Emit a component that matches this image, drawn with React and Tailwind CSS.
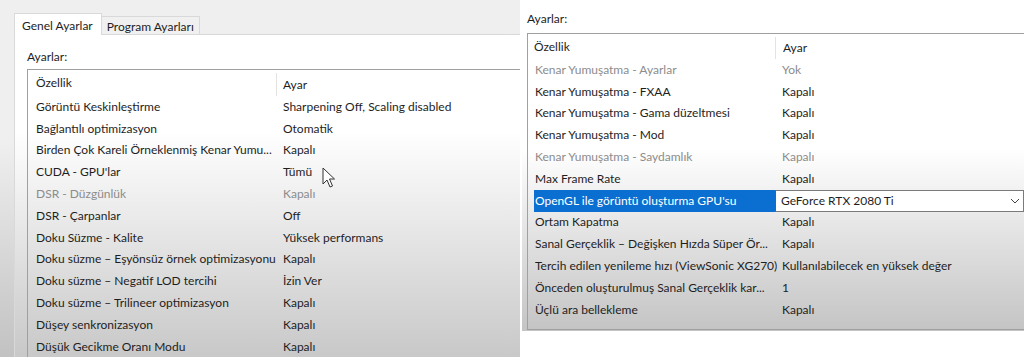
import React from 'react';

const leftRows = [
  ['Görüntü Keskinleştirme', 'Sharpening Off, Scaling disabled'],
  ['Bağlantılı optimizasyon', 'Otomatik'],
  ['Birden Çok Kareli Örneklenmiş Kenar Yumu...', 'Kapalı'],
  ["CUDA - GPU'lar", 'Tümü'],
  ['DSR - Düzgünlük', 'Kapalı', true],
  ['DSR - Çarpanlar', 'Off'],
  ['Doku Süzme - Kalite', 'Yüksek performans'],
  ['Doku süzme – Eşyönsüz örnek optimizasyonu', 'Kapalı'],
  ['Doku süzme – Negatif LOD tercihi', 'İzin Ver'],
  ['Doku süzme – Trilineer optimizasyon', 'Kapalı'],
  ['Düşey senkronizasyon', 'Kapalı'],
  ['Düşük Gecikme Oranı Modu', 'Kapalı'],
];

const rightRows = [
  ['Kenar Yumuşatma - Ayarlar', 'Yok', true],
  ['Kenar Yumuşatma - FXAA', 'Kapalı'],
  ['Kenar Yumuşatma - Gama düzeltmesi', 'Kapalı'],
  ['Kenar Yumuşatma - Mod', 'Kapalı'],
  ['Kenar Yumuşatma - Saydamlık', 'Kapalı', true],
  ['Max Frame Rate', 'Kapalı'],
  ["OpenGL ile görüntü oluşturma GPU'su", 'GeForce RTX 2080 Ti', false, true],
  ['Ortam Kapatma', 'Kapalı'],
  ['Sanal Gerçeklik – Değişken Hızda Süper Ör...', 'Kapalı'],
  ['Tercih edilen yenileme hızı (ViewSonic XG270)', 'Kullanılabilecek en yüksek değer'],
  ['Önceden oluşturulmuş Sanal Gerçeklik kar...', '1'],
  ['Üçlü ara bellekleme', 'Kapalı'],
];

const Cursor = () => (
  <svg className="absolute left-[322px] top-[167px]" width="14" height="22" viewBox="0 0 14 22">
    <path d="M1 1 L1 17 L5 13 L8 20 L10.5 19 L7.5 12 L12.5 12 Z" fill="#fff" stroke="#333" strokeWidth="1" strokeLinejoin="round" />
  </svg>
);

const Row = ({ name, value, muted, selected, colW }) => {
  const tone = muted ? 'text-[#8c8c8c]' : 'text-[#1e1e1e]';
  if (selected) {
    return (
      <div className="flex h-[21.8px] items-stretch">
        <div className={`${colW} flex items-center`}>
          <div className="h-full flex-1 bg-[#0a6fd0] text-white flex items-center pl-px whitespace-nowrap overflow-hidden">{name}</div>
        </div>
        <div className="flex-1 flex items-center justify-between bg-white border border-[#7a7a7a] border-l-[#0a6fd0] pl-[5px] pr-[3px]">
          <span className="text-[#1e1e1e]">{value}</span>
          <svg width="10" height="6" viewBox="0 0 10 6"><path d="M1 1 L5 5 L9 1" fill="none" stroke="#444" strokeWidth="1" /></svg>
        </div>
      </div>
    );
  }
  return (
    <div className="flex h-[21.8px] items-center">
      <div className={`${colW} shrink-0 whitespace-nowrap pl-px ${tone}`}>{name}</div>
      <div className={`flex-1 pl-[7px] whitespace-nowrap ${tone}`}>{value}</div>
    </div>
  );
};

export default function App() {
  return (
    <div className="relative flex w-[1024px] h-[357px] bg-white overflow-hidden font-['Lato','Open_Sans',sans-serif] text-[12px] leading-4">
      {/* left screenshot */}
      <div className="w-[520px] h-full flex flex-col pl-[14px] pt-[13px] bg-gradient-to-b from-[#efefef] from-40% to-[#c2c2c2]">
        <div className="flex items-end h-[22px]">
          <div className="h-[22px] pl-[7px] pr-[8px] pt-[2px] bg-white border border-b-0 border-[#d9d9d9] flex items-center text-[#1e1e1e] relative z-10 -mb-px">Genel Ayarlar</div>
          <div className="h-[18px] px-[5px] pt-[2px] bg-[#f0f0f0] border border-l-0 border-b-0 border-[#d9d9d9] flex items-center text-[#1e1e1e]">Program Ayarları</div>
        </div>
        <div className="flex-1 flex flex-col border-t border-l border-[#d9d9d9] pl-[12px] pt-[14px] bg-gradient-to-b from-white from-30% to-[#c8c8c8]">
          <div className="text-[#1e1e1e] mb-[4px]">Ayarlar:</div>
          <div className="flex-1 border-t border-l border-[#a0a0a0] pl-[7px]">
            <div className="flex h-[26px] items-center">
              <div className="w-[241px] pl-px text-[#1e1e1e]">Özellik</div>
              <div className="flex-1 self-stretch flex items-center border-l border-[#e3e3e3] mt-[3px] pl-[6px] text-[#1e1e1e]">Ayar</div>
            </div>
            {leftRows.map(([n, v, m]) => (
              <Row key={n} name={n} value={v} muted={m} colW="w-[241px]" />
            ))}
          </div>
        </div>
      </div>

      {/* right screenshot */}
      <div className="ml-[2px] w-[502px] h-[331px] flex flex-col pl-[5px] pt-[11px] bg-gradient-to-b from-white from-45% to-[#c4c4c4]">
        <div className="text-[#1e1e1e] mb-[6px]">Ayarlar:</div>
        <div className="flex-1 border-t border-l border-b border-[#a0a0a0] pl-[6px] mb-[1px]">
          <div className="flex h-[25px] items-center">
            <div className="w-[241px] text-[#1e1e1e]">Özellik</div>
            <div className="flex-1 self-stretch flex items-center border-l border-[#e3e3e3] mt-[3px] pl-[7px] text-[#1e1e1e]">Ayar</div>
          </div>
          {rightRows.map(([n, v, m, s]) => (
            <Row key={n} name={n} value={v} muted={m} selected={s} colW="w-[241px]" />
          ))}
        </div>
      </div>

      <Cursor />
    </div>
  );
}
